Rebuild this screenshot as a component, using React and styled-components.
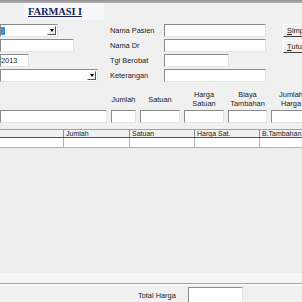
import styled, { createGlobalStyle } from "styled-components";

const GlobalStyle = createGlobalStyle`
  html, body {
    margin: 0;
    padding: 0;
    background: #f0f0f0;
    overflow: hidden;
  }
`;

const App = () => {
  return (
    <>
      <GlobalStyle />
      <Page>
        <TopBar />
        <TitleRow>
          <TitleBox>
            <Title>FARMASI I</Title>
          </TitleBox>
        </TitleRow>

        <Upper>
          <LeftCol>
            <Combo $w={58}>
              <ComboText>
                <Selected />
              </ComboText>
              <DropBtn>
                <Arrow />
              </DropBtn>
            </Combo>
            <TextBox $w={74} />
            <TextBox $w={29}>2013</TextBox>
            <Combo $w={98}>
              <ComboText />
              <DropBtn>
                <Arrow />
              </DropBtn>
            </Combo>
          </LeftCol>

          <FieldGrid>
            <Label>Nama Pasien</Label>
            <TextBox $w={102} />
            <Label>Nama Dr</Label>
            <TextBox $w={102} />
            <Label>Tgl Berobat</Label>
            <TextBox $w={65} />
            <Label>Keterangan</Label>
            <TextBox $w={102} />
          </FieldGrid>

          <BtnCol>
            <Button>
              <u>S</u>impan
            </Button>
            <Button>
              <u>T</u>utup
            </Button>
          </BtnCol>
        </Upper>

        <EntryGrid>
          <HeadLabel />
          <HeadLabel>Jumlah</HeadLabel>
          <HeadLabel>Satuan</HeadLabel>
          <HeadLabel>
            Harga
            <br />
            Satuan
          </HeadLabel>
          <HeadLabel>
            Biaya
            <br />
            Tambahan
          </HeadLabel>
          <HeadLabel>
            Jumlah
            <br />
            Harga
          </HeadLabel>
          <TextBox />
          <TextBox />
          <TextBox />
          <TextBox />
          <TextBox />
          <TextBox />
        </EntryGrid>

        <FlexGrid>
          <GridHeader>
            <HeadCell $w={64} />
            <HeadCell $w={66}>Jumlah</HeadCell>
            <HeadCell $w={65}>Satuan</HeadCell>
            <HeadCell $w={65}>Harga Sat.</HeadCell>
            <HeadCell $w={60}>B.Tambahan</HeadCell>
          </GridHeader>
          <GridRow>
            <Cell $w={64} />
            <Cell $w={66} />
            <Cell $w={65} />
            <Cell $w={65} />
            <Cell $w={60} />
          </GridRow>
        </FlexGrid>

        <Strip />

        <Footer>
          <FooterLabel>Total Harga</FooterLabel>
          <TextBox $w={55} $h={16} />
        </Footer>
      </Page>
    </>
  );
};

// ===== Styled Components =====
const Page = styled.div`
  width: 302px;
  height: 302px;
  overflow: hidden;
  display: flex;
  flex-direction: column;
  background: #f0f0f0;
  font-family: "Liberation Sans", Arial, sans-serif;
  font-size: 7.4px;
  color: #1a1a1a;
`;

const TopBar = styled.div`
  height: 3px;
  flex-shrink: 0;
  background: linear-gradient(#8f8f8f, #b4b4b4);
`;

const TitleRow = styled.div`
  height: 18px;
  flex-shrink: 0;
  display: flex;
  padding-left: 24px;
`;

const TitleBox = styled.div`
  width: 80px;
  height: 17px;
  background: #f6f7fb;
  display: flex;
  align-items: center;
  padding-left: 4px;
  box-sizing: border-box;
`;

const Title = styled.span`
  font-family: "Liberation Serif", "Times New Roman", serif;
  font-weight: bold;
  font-size: 10.5px;
  color: #1c1f5c;
  text-decoration: underline;
  letter-spacing: -0.1px;
`;

const Upper = styled.div`
  display: flex;
  flex-shrink: 0;
  margin-top: 3px;
  height: 58px;
`;

const LeftCol = styled.div`
  width: 110px;
  flex-shrink: 0;
  display: flex;
  flex-direction: column;
  gap: 2px;
`;

const TextBox = styled.div`
  width: ${(p) => (p.$w ? `${p.$w}px` : "auto")};
  height: ${(p) => (p.$h ? `${p.$h}px` : "13px")};
  flex-shrink: 0;
  box-sizing: border-box;
  background: #ffffff;
  border-style: solid;
  border-width: 1px;
  border-color: #8a8a8a #e4e4e4 #e4e4e4 #8a8a8a;
  display: flex;
  align-items: center;
  line-height: 1;
`;

const Combo = styled.div`
  width: ${(p) => p.$w}px;
  height: 13px;
  box-sizing: border-box;
  background: #ffffff;
  border-style: solid;
  border-width: 1px;
  border-color: #8a8a8a #e4e4e4 #e4e4e4 #8a8a8a;
  display: flex;
  align-items: center;
`;

const ComboText = styled.div`
  flex: 1;
  display: flex;
  align-items: center;
`;

const Selected = styled.span`
  display: block;
  width: 4px;
  height: 8px;
  background: #3d8fe0;
`;

const DropBtn = styled.div`
  width: 9px;
  height: 9px;
  margin-right: 1px;
  box-sizing: border-box;
  background: #f0f0f0;
  border-style: solid;
  border-width: 1px;
  border-color: #ffffff #555555 #555555 #ffffff;
  display: flex;
  align-items: center;
  justify-content: center;
`;

const Arrow = styled.span`
  width: 0;
  height: 0;
  border-left: 2.5px solid transparent;
  border-right: 2.5px solid transparent;
  border-top: 3px solid #000;
`;

const FieldGrid = styled.div`
  flex-shrink: 0;
  display: grid;
  grid-template-columns: 54px 119px;
  grid-auto-rows: 13px;
  row-gap: 2px;
  align-items: center;
`;

const Label = styled.span`
  white-space: nowrap;
`;

const BtnCol = styled.div`
  flex-shrink: 0;
  display: flex;
  flex-direction: column;
  gap: 3px;
`;

const Button = styled.div`
  width: 40px;
  height: 13px;
  box-sizing: border-box;
  border-style: solid;
  border-width: 1px;
  border-color: #ffffff #3c3c3c #3c3c3c #ffffff;
  background: #f0f0f0;
  display: flex;
  align-items: center;
  padding-left: 3px;
`;

const EntryGrid = styled.div`
  flex-shrink: 0;
  margin-top: 8px;
  display: grid;
  grid-template-columns: 107px 25px 40px 40px 39px 40px;
  grid-template-rows: 18px 13px;
  column-gap: 4px;
  row-gap: 2px;
`;

const HeadLabel = styled.div`
  display: flex;
  align-items: center;
  justify-content: center;
  text-align: center;
  line-height: 9px;
  white-space: nowrap;
`;

const FlexGrid = styled.div`
  flex-shrink: 0;
  margin-top: 6px;
  height: 144px;
  background: #eeeeee;
  display: flex;
  flex-direction: column;
`;

const GridHeader = styled.div`
  display: flex;
  height: 9px;
  box-sizing: border-box;
  border-top: 1px solid #a0a0a0;
  border-bottom: 1px solid #505050;
  background: #f0f0f0;
`;

const HeadCell = styled.div`
  width: ${(p) => p.$w}px;
  flex-shrink: 0;
  box-sizing: border-box;
  border-right: 1px solid #8c8c8c;
  padding-left: 2px;
  font-size: 7px;
  line-height: 8px;
  text-decoration: underline;
  white-space: nowrap;
  overflow: hidden;
`;

const GridRow = styled.div`
  display: flex;
  height: 10px;
  box-sizing: border-box;
  background: #ffffff;
  border-bottom: 1px solid #b4b4b4;
`;

const Cell = styled.div`
  width: ${(p) => p.$w}px;
  flex-shrink: 0;
  box-sizing: border-box;
  border-right: 1px solid #b4b4b4;
`;

const Strip = styled.div`
  height: 10px;
  flex-shrink: 0;
  background: #f6f6f6;
  border-bottom: 1px solid #a0a0a0;
  box-shadow: 0 1px 0 #ffffff;
`;

const Footer = styled.div`
  flex-shrink: 0;
  display: flex;
  align-items: center;
  padding-left: 138px;
  margin-top: 3px;
  gap: 13px;
`;

const FooterLabel = styled.span`
  white-space: nowrap;
  width: 37px;
`;

export default App;
